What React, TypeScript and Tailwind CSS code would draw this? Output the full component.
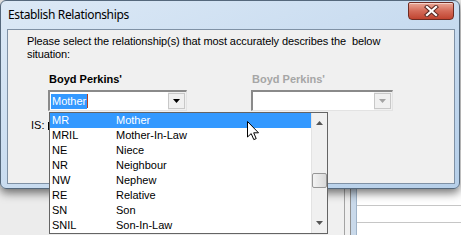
import React from 'react';

const rows = [
  ['MR', 'Mother'],
  ['MRIL', 'Mother-In-Law'],
  ['NE', 'Niece'],
  ['NR', 'Neighbour'],
  ['NW', 'Nephew'],
  ['RE', 'Relative'],
  ['SN', 'Son'],
  ['SNIL', 'Son-In-Law'],
];

const DropArrow = ({ disabled }: { disabled?: boolean }) => (
  <svg width="7" height="4" viewBox="0 0 7 4">
    <path d="M0 0 H7 L3.5 4 Z" fill={disabled ? '#a3a3a3' : '#000'} />
  </svg>
);

const Combo = ({ width, disabled, children }: any) => (
  <div
    className={`h-[21px] flex border-t-2 border-l-2 border-b border-r border-t-[#8a8a8a] border-l-[#8a8a8a] border-b-[#e3e3e3] border-r-[#e3e3e3] ${width}`}
  >
    <div className="flex-1 bg-white flex items-center pl-[1px]">{children}</div>
    <div className="w-[17px] my-[1px] mr-[1px] bg-[#f0f0f0] border border-[#c8c8c8] flex items-center justify-center">
      <DropArrow disabled={disabled} />
    </div>
  </div>
);

export default function App() {
  return (
    <div
      className="relative w-[461px] h-[235px] overflow-hidden bg-[#ececec] text-black"
      style={{ fontFamily: '"Liberation Sans", Arial, sans-serif' }}
    >
      {/* window behind the dialog */}
      <div className="absolute left-[327px] top-[150px] right-0 bottom-0 flex">
        <div className="w-[18px] bg-[#f0f0f0] border-r border-[#a3a3a3]" />
        <div className="w-[6px] bg-[#f0f0f0] border-r border-[#8f8f8f]" />
        <div className="w-[6px] bg-[#c9d9ea] border-r border-[#9fb3c8]" />
        <div className="flex-1 bg-white flex flex-col">
          <div className="h-[56px] border-b border-[#c6c6c6]" />
          <div className="h-[17px] border-b border-[#c6c6c6]" />
        </div>
      </div>

      {/* dialog */}
      <div className="absolute left-0 top-0 w-[460px] h-[189px] rounded-[6px] border border-[#55687c] bg-gradient-to-br from-[#dce9f6] via-[#c9dcf0] to-[#b6cfe9] shadow-[0_4px_10px_rgba(0,0,0,0.55)]">
        <div className="h-[28px] flex items-start justify-between">
          <span
            className="pl-[7px] pt-[6px] text-[12px] leading-[16px] tracking-[-0.35px] text-black"
            style={{ fontFamily: '"Noto Sans", "Open Sans", sans-serif' }}
          >
            Establish Relationships
          </span>
          <div className="mt-[1px] mr-[5px] w-[46px] h-[18px] rounded-b-[4px] rounded-t-[2px] border border-[#6f2b22] bg-gradient-to-b from-[#e9a898] via-[#d46a58] to-[#c0432f] flex items-center justify-center shadow-[inset_0_1px_0_rgba(255,255,255,0.5)]">
            <svg width="15" height="12" viewBox="0 0 15 12">
              <path d="M3 2 L12 10 M12 2 L3 10" stroke="#5a2a24" strokeWidth="4.2" strokeLinecap="square" />
              <path d="M3 2 L12 10 M12 2 L3 10" stroke="#fff" strokeWidth="2.2" strokeLinecap="square" />
            </svg>
          </div>
        </div>

        <div className="ml-[6px] w-[448px] h-[155px] border border-[#7f91a5] bg-[#f0f0f0]">
          <div className="pl-[19px] pt-[5px] text-[11px] leading-[13px] tracking-[-0.1px]">
            <p>Please select the relationship(s) that most accurately describes the &nbsp;below</p>
            <p>situation:</p>
          </div>

          <div className="mt-[12px] pl-[40px] flex gap-[64px] text-[11px] leading-[13px]">
            <div className="flex flex-col gap-[4px]">
              <span className="pl-[1px] font-bold">Boyd Perkins'</span>
              <Combo width="w-[139px]">
                <span className="bg-[#3399ff] text-white px-[1px] leading-[15px]">Mother</span>
                <span className="w-[1px] h-[14px] bg-[#b5401f]" />
              </Combo>
            </div>
            <div className="flex flex-col gap-[4px]">
              <span className="pl-[1px] font-bold text-[#a6a6a6]">Boyd Perkins'</span>
              <Combo width="w-[142px]" disabled />
            </div>
          </div>

          <div className="mt-[8px] pl-[23px] flex items-center gap-[4px] text-[11px] leading-[13px]">
            <span>IS:</span>
            <span className="w-[2px] h-[8px] bg-black" />
          </div>
        </div>
      </div>

      {/* open drop-down list */}
      <div className="absolute left-[49px] top-[112px] w-[279px] h-[122px] bg-white border border-[#646464] flex text-[11px]">
        <div className="flex-1 flex flex-col">
          {rows.map(([code, name], i) => (
            <div
              key={code}
              className={`h-[15px] flex items-center pl-[2px] ${i === 0 ? 'bg-[#3399ff] text-white' : ''}`}
            >
              <span className="w-[64px]">{code}</span>
              <span>{name}</span>
            </div>
          ))}
        </div>
        <div className="w-[16px] bg-[#f0f0f0] border-l border-[#e3e3e3] flex flex-col items-center">
          <div className="h-[20px] flex items-center">
            <svg width="7" height="4" viewBox="0 0 7 4">
              <path d="M0 4 H7 L3.5 0 Z" fill="#555" />
            </svg>
          </div>
          <div className="mt-[40px] w-[15px] h-[15px] rounded-[2px] border border-[#979797] bg-gradient-to-r from-[#f3f3f3] to-[#d9d9d9]" />
          <div className="flex-1" />
          <div className="h-[20px] flex items-center">
            <svg width="7" height="4" viewBox="0 0 7 4">
              <path d="M0 0 H7 L3.5 4 Z" fill="#555" />
            </svg>
          </div>
        </div>
      </div>

      {/* mouse pointer */}
      <svg className="absolute left-[247px] top-[121px]" width="13" height="20" viewBox="0 0 13 20">
        <path
          d="M0.5 0.5 L0.5 16 L4.2 12.6 L6.8 18.6 L9.2 17.6 L6.7 11.8 L11.5 11.8 Z"
          fill="#fff"
          stroke="#000"
          strokeWidth="1"
          strokeLinejoin="miter"
        />
      </svg>
    </div>
  );
}
